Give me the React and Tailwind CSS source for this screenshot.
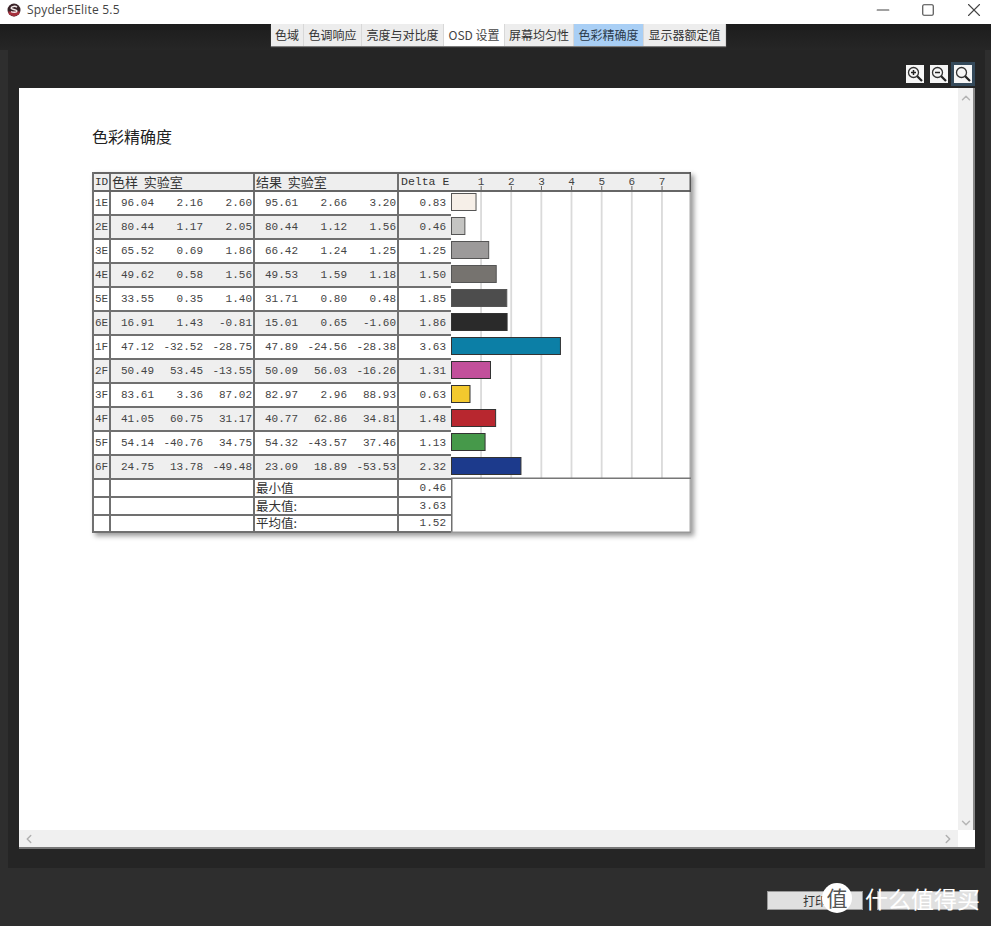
import { ChevronUp, ChevronDown, ChevronLeft, ChevronRight, Minus, Square, X } from 'lucide-react';

const mono = "font-['Liberation_Mono','Noto_Sans_CJK_SC',monospace]";
const cjk = "font-['Noto_Sans_CJK_SC','Noto_Sans',sans-serif]";

const tabs = [
    { label: '色域', w: 'w-[33px]' },
    { label: '色调响应', w: 'w-[58px]' },
    { label: '亮度与对比度', w: 'w-[82px]' },
    { label: 'OSD 设置', w: 'w-[61px]', current: true },
    { label: '屏幕均匀性', w: 'w-[69px]' },
    { label: '色彩精确度', w: 'w-[70px]', active: true },
    { label: '显示器额定值', w: 'w-[82px]' },
];

const rows = [
    { id: '1E', ref: ['96.04', '2.16', '2.60'], res: ['95.61', '2.66', '3.20'], de: 0.83, color: '#f6efe8' },
    { id: '2E', ref: ['80.44', '1.17', '2.05'], res: ['80.44', '1.12', '1.56'], de: 0.46, color: '#c4c4c2' },
    { id: '3E', ref: ['65.52', '0.69', '1.86'], res: ['66.42', '1.24', '1.25'], de: 1.25, color: '#9c9a9a' },
    { id: '4E', ref: ['49.62', '0.58', '1.56'], res: ['49.53', '1.59', '1.18'], de: 1.5, color: '#76736f' },
    { id: '5E', ref: ['33.55', '0.35', '1.40'], res: ['31.71', '0.80', '0.48'], de: 1.85, color: '#4d4d4d' },
    { id: '6E', ref: ['16.91', '1.43', '-0.81'], res: ['15.01', '0.65', '-1.60'], de: 1.86, color: '#2a2a2a' },
    { id: '1F', ref: ['47.12', '-32.52', '-28.75'], res: ['47.89', '-24.56', '-28.38'], de: 3.63, color: '#0c7fa6' },
    { id: '2F', ref: ['50.49', '53.45', '-13.55'], res: ['50.09', '56.03', '-16.26'], de: 1.31, color: '#c2509b' },
    { id: '3F', ref: ['83.61', '3.36', '87.02'], res: ['82.97', '2.96', '88.93'], de: 0.63, color: '#f3c92e' },
    { id: '4F', ref: ['41.05', '60.75', '31.17'], res: ['40.77', '62.86', '34.81'], de: 1.48, color: '#b8272f' },
    { id: '5F', ref: ['54.14', '-40.76', '34.75'], res: ['54.32', '-43.57', '37.46'], de: 1.13, color: '#46994a' },
    { id: '6F', ref: ['24.75', '13.78', '-49.48'], res: ['23.09', '18.89', '-53.53'], de: 2.32, color: '#1c3a8c' },
];

const summary = [
    { label: '最小值', value: '0.46', h: 'h-[18px]' },
    { label: '最大值:', value: '3.63', h: 'h-[18px]' },
    { label: '平均值:', value: '1.52', h: 'h-[17px]' },
];

const Triple = ({ values }) => (
    <div className="w-[144px] h-full grid grid-cols-[43px_49px_49px] border-r-2 border-[#707070] items-center">
        {values.map((v, i) => (
            <span key={i} className="text-right whitespace-nowrap">{v}</span>
        ))}
    </div>
);

// Spyder logo in the title bar
const SpyderLogo = () => (
    <svg width="14" height="14" viewBox="0 0 14 14">
        <circle cx="7" cy="7" r="6.5" fill="#3a2328" />
        <path d="M1 8.5h12l-1 3-5 2-5-2z" fill="#a5303c" />
        <path d="M10 4.2C8.6 3 4.4 3 4.2 5c-.1 1.800 5.600 1 5.600 3 0 1.700-4 1.600-5.800.6" fill="none" stroke="#f2e8e8" strokeWidth="1.500" />
    </svg>
);

const ZoomIcon = ({ kind, selected }) => (
    <div className={`w-[18px] h-[18px] bg-[#f6f6f6] flex items-center justify-center ${selected ? 'outline-[3px] outline-[#34495a]' : ''}`}>
        <svg width="16" height="16" viewBox="0 0 16 16">
            <circle cx="6.500" cy="6.500" r="5" fill="none" stroke="#333" strokeWidth="1.300" />
            <path d="M10.200 10.200L15 15" stroke="#222" strokeWidth="2.200" />
            {kind !== 'fit' && <path d="M4 6.500h5" stroke="#222" strokeWidth="1.500" />}
            {kind === 'in' && <path d="M6.500 4v5" stroke="#222" strokeWidth="1.500" />}
        </svg>
    </div>
);

// bars, grid lines and scale of the Delta E column
const Chart = () => (
    <svg width="240" height="361" viewBox="0 0 240 361" className="block shrink-0">
        <rect x="0" y="0" width="240" height="19" fill="#eeeeee" />
        <rect x="0" y="0" width="240" height="2" fill="#666" />
        <rect x="0" y="18" width="240" height="2" fill="#666" />
        <rect x="238.500" y="0" width="1.500" height="20" fill="#555" />
        <rect x="238.500" y="20" width="1.500" height="341" fill="#aaa" />
        {[1, 2, 3, 4, 5, 6, 7].map((n) => {
            const x = n * 30.15;
            return (
                <g key={n}>
                    <rect x={x - 1} y="20" width="1.800" height="286" fill="#dadada" />
                    <rect x={x - 0.500} y="14" width="1" height="5" fill="#666" />
                    <text x={x} y="13" textAnchor="middle" fontSize="11" fill="#444" fontFamily="'Liberation Mono',monospace">{n}</text>
                </g>
            );
        })}
        {rows.map((r, i) => (
            <rect
                key={r.id}
                x="0.500"
                y={21.500 + i * 24}
                width={r.de * 30.15 - 0.500}
                height="17"
                fill={r.color}
                stroke={i < 5 ? '#555' : '#333'}
            />
        ))}
        <rect x="0" y="305.500" width="240" height="1.500" fill="#777" />
        <rect x="0" y="306" width="1.500" height="55" fill="#707070" />
        <rect x="0" y="359.500" width="240" height="1.500" fill="#999" />
    </svg>
);

const ResultTable = () => (
    <div className="flex w-[599px] h-[361px] shadow-[3px_3px_5px_rgba(0,0,0,0.4)] bg-white">
        <div className={`w-[359px] shrink-0 border-l-2 border-[#707070] text-[11px] leading-none text-[#444] flex flex-col ${mono}`}>
            {/* header */}
            <div className="h-[20px] shrink-0 flex bg-[#eeeeee] border-y-2 border-[#666] items-center text-[#333]">
                <div className="w-[17px] h-full flex items-center border-r-2 border-[#707070] justify-center">ID</div>
                <div className={`w-[144px] h-full flex items-center pl-[1px] pb-[2px] border-r-2 border-[#707070] text-[13px] leading-none whitespace-pre ${cjk}`}>色样  实验室</div>
                <div className={`w-[144px] h-full flex items-center pl-[1px] pb-[2px] border-r-2 border-[#707070] text-[13px] leading-none whitespace-pre ${cjk}`}>结果  实验室</div>
                <div className="w-[52px] h-full flex items-center pl-[2px] whitespace-nowrap text-[11.500px]">Delta E</div>
            </div>
            {rows.map((r, i) => (
                <div key={r.id} className={`h-[24px] shrink-0 flex items-center border-b-2 border-[#707070] ${i % 2 ? 'bg-[#efefef]' : 'bg-white'}`}>
                    <div className="w-[17px] h-full flex items-center justify-center border-r-2 border-[#707070]">{r.id}</div>
                    <Triple values={r.ref} />
                    <Triple values={r.res} />
                    <div className="w-[52px] text-right pr-[5px]">{r.de.toFixed(2)}</div>
                </div>
            ))}
            {summary.map((s) => (
                <div key={s.label} className={`${s.h} shrink-0 flex items-center border-b-2 border-[#707070] bg-white`}>
                    <div className="w-[17px] h-full border-r-2 border-[#707070]" />
                    <div className="w-[144px] h-full border-r-2 border-[#707070]" />
                    <div className={`w-[144px] h-full flex items-center pl-[1px] border-r-2 border-[#707070] text-[12.500px] leading-none text-[#333] ${cjk}`}>{s.label}</div>
                    <div className="w-[52px] text-right pr-[5px]">{s.value}</div>
                </div>
            ))}
        </div>
        <Chart />
    </div>
);

export default function App() {
    return (
        <div className={`w-[991px] h-[926px] bg-[#2e2e2e] flex flex-col overflow-hidden relative ${cjk}`}>
            {/* title bar */}
            <div className="h-[24px] bg-white shrink-0 flex items-center pl-[7px] pb-[5px]">
                <SpyderLogo />
                <span className="ml-[6px] text-[12px] tracking-[0.2px] text-[#444] font-['Open_Sans',sans-serif]">Spyder5Elite 5.5</span>
                <div className="ml-auto flex items-center text-[#444] mr-[6px] gap-[28px]">
                    <Minus size={20} strokeWidth={1.300} />
                    <Square size={14} strokeWidth={1.900} />
                    <X size={22} strokeWidth={1.200} />
                </div>
            </div>

            {/* tabs */}
            <div className="h-[26px] shrink-0 bg-[linear-gradient(#1c1c1c,#262626)] pl-[271px]">
                <div className="flex h-[22px] w-fit shadow-[0_1px_1px_rgba(255,255,255,0.4)]">
                    {tabs.map((t) => (
                        <div
                            key={t.label}
                            className={`${t.w} flex items-center justify-center text-[12px] whitespace-nowrap border-r border-[#d8d8d8] ${t.active ? 'bg-[#a9cff5] text-[#2a3a4a]' : t.current ? 'bg-white text-[#444]' : 'bg-[#ededed] text-[#333]'}`}
                        >
                            {t.label}
                        </div>
                    ))}
                </div>
            </div>

            {/* main panel */}
            <div className="h-[818px] shrink-0 ml-[8px] mr-[6px] bg-[#252525] flex flex-col">
                <div className="h-[38px] shrink-0 flex justify-end items-end gap-[6px] pr-[13px] pb-[5px]">
                    <ZoomIcon kind="in" />
                    <ZoomIcon kind="out" />
                    <ZoomIcon kind="fit" selected />
                </div>
                <div className="ml-[11px] w-[956px] h-[761px] bg-white flex flex-col border-b-2 border-[#777]">
                    <div className="flex-1 flex min-h-0">
                        <div className="flex-1 pl-[73px] pt-[37px]">
                            <div className="h-[22px] flex items-center text-[16px] text-[#222]">色彩精确度</div>
                            <div className="mt-[25px]">
                                <ResultTable />
                            </div>
                        </div>
                        <div className="w-[17px] bg-[#f0f0f0] border-r-2 border-[#888] flex flex-col items-center justify-between pt-[3px] text-[#b5b5b5]">
                            <ChevronUp size={14} strokeWidth={2.500} />
                            <ChevronDown size={14} strokeWidth={2.500} />
                        </div>
                    </div>
                    <div className="h-[17px] shrink-0 flex">
                        <div className="flex-1 bg-[#f0f0f0] flex items-center justify-between px-[3px] text-[#b0b0b0]">
                            <ChevronLeft size={14} strokeWidth={2.500} />
                            <ChevronRight size={14} strokeWidth={2.500} />
                        </div>
                        <div className="w-[17px] bg-white" />
                    </div>
                </div>
            </div>

            {/* bottom buttons */}
            <div className="flex-1 flex justify-end items-start gap-[14px] pt-[23px] pr-[13px]">
                <div className="w-[96px] h-[19px] bg-[#e0e0e0] border border-[#999] flex items-center justify-center text-[12px] text-[#333]">打印</div>
                <div className="w-[101px] h-[19px] bg-[#e0e0e0] border border-[#999]" />
            </div>

            {/* watermark */}
            <div className="absolute left-[822px] top-[883px] flex items-center">
                <div className="w-[30px] h-[30px] rounded-full bg-white flex items-center justify-center text-[21px] text-[#555]">值</div>
                <span className="ml-[13px] text-[23px] leading-none text-white whitespace-nowrap">什么值得买</span>
            </div>
        </div>
    );
}
